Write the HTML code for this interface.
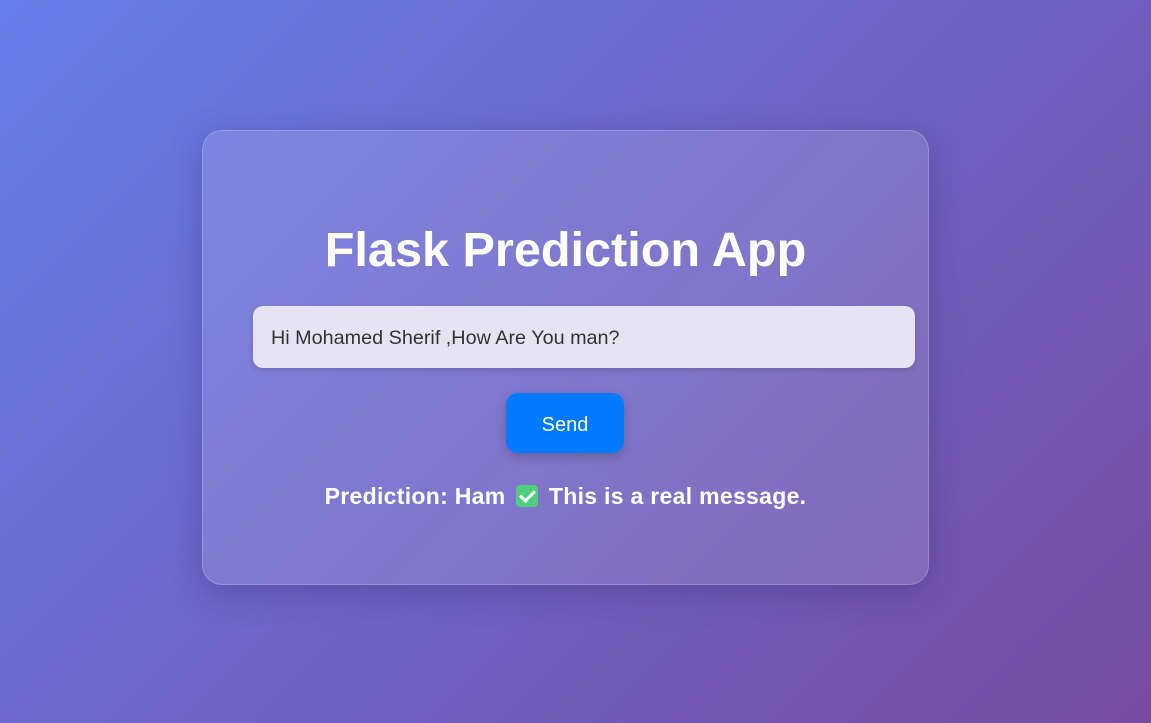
<!DOCTYPE html>
<html><head><meta charset="utf-8"><style>
html,body{margin:0;width:1151px;height:723px;overflow:hidden}
body{background:linear-gradient(135deg,#667eea 0%,#764ba2 100%);font-family:"Liberation Sans","DejaVu Sans",sans-serif;position:relative}
.card{position:absolute;left:202px;top:130px;width:725px;height:453px;border-radius:20px;background:rgba(255,255,255,0.12);border:1px solid rgba(255,255,255,0.2);box-shadow:0 8px 32px rgba(40,30,100,0.3)}
h1{position:absolute;left:202px;width:727px;top:222px;margin:0;text-align:center;color:#fff;font-size:48.6px;font-weight:bold;line-height:56px}
.inp{position:absolute;left:253px;top:306px;width:644px;height:62px;padding-left:18px;border-radius:10px;background:#e6e3f4;color:#333;font-size:19.8px;line-height:64px;box-shadow:0 2px 6px rgba(0,0,0,0.15)}
.btn{position:absolute;left:506px;top:393px;width:118px;height:60px;border-radius:12px;background:#007bff;color:#fff;font-size:20px;line-height:64px;text-align:center;box-shadow:0 4px 10px rgba(0,0,0,0.2)}
.pred{position:absolute;left:202px;width:727px;top:482px;text-align:center;color:#fff;font-weight:bold;font-size:23px;letter-spacing:0.3px;line-height:28px}
.chk{display:inline-block;width:22px;height:22px;background:#4fcf7e;border-radius:4px;vertical-align:-3px;position:relative;margin:0 4px}
.chk:after{content:"";position:absolute;left:7px;top:2px;width:6px;height:12px;border:solid #fff;border-width:0 3px 3px 0;transform:rotate(45deg)}
</style></head><body>
<div class="card"></div>
<h1>Flask Prediction App</h1>
<div class="inp">Hi Mohamed Sherif ,How Are You man?</div>
<div class="btn">Send</div>
<div class="pred">Prediction: Ham <span class="chk"></span> This is a real message.</div>
</body></html>
